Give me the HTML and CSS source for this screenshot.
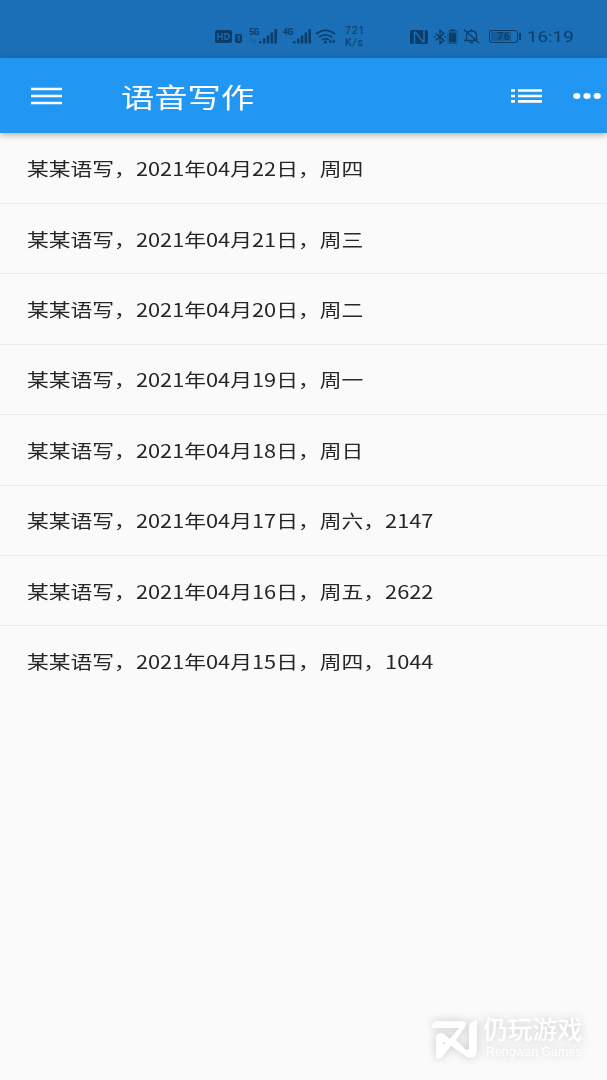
FILE: index.html
```html
<!DOCTYPE html>
<html lang="zh-CN">

<head>
    <meta charset="UTF-8">
    <meta name="viewport" content="width=device-width, initial-scale=1.0">
    <title>语音写作</title>
    <link rel="stylesheet" href="styles.css">
</head>

<body>

    <!-- Status bar -->
    <div class="status-bar">
        <svg class="icon-hd" width="28" height="16" viewBox="0 0 28 16">
            <rect x="0" y="1" width="17" height="13" rx="2" fill="currentColor"/>
            <path d="M3 4v7M7 4v7M3 7.5h4M10 4.7v5.6h1.5q2.5 0 2.5-2.8t-2.5-2.8z" fill="none" stroke="#1a6fb6" stroke-width="1.2"/>
            <rect x="20" y="5" width="7" height="9" rx="2" fill="currentColor"/>
            <path d="M22.500 8l1.500-1v5" fill="none" stroke="#1a6fb6" stroke-width="1.2"/>
        </svg>
        <div class="signal">
            <span class="net">5G</span>
            <svg width="28" height="16" viewBox="0 0 28 16" fill="currentColor">
                <path d="M10 12h2.500v2.500H10zM14 9.500h2.500v5H14zM17.800 6.500h2.500v8h-2.500zM21.600 3.500h2.500v11h-2.500zM25.400 0h2.500v14.500h-2.500z"/>
                <path d="M3 10v4M1.8 11.5L3 10M6 10v4M6 14l1.2-1.5" fill="none" stroke="currentColor" opacity=".3"/>
            </svg>
        </div>
        <div class="signal">
            <span class="net">4G</span>
            <svg width="28" height="16" viewBox="0 0 28 16" fill="currentColor">
                <path d="M10 12h2.500v2.500H10zM14 9.500h2.500v5H14zM17.800 6.500h2.500v8h-2.500zM21.600 3.500h2.500v11h-2.500zM25.400 0h2.500v14.500h-2.500z"/>
            </svg>
        </div>
        <svg class="icon-wifi" width="22" height="16" viewBox="0 0 22 16">
            <path d="M1 5q9.500-7.500 19 0M4 8.200q6.500-5 13 0M7 11q3.500-2.500 7 0" fill="none" stroke="currentColor" stroke-width="1.6"/>
            <circle cx="10.500" cy="13" r="1.500" fill="currentColor"/>
            <path d="M16.500 10.500v4l-3-2zM17.800 10.500v4l3-2z" fill="currentColor"/>
        </svg>
        <div class="speed"><span>721</span><span>K/s</span></div>
        <svg class="icon-nfc" width="18" height="14" viewBox="0 0 18 14">
            <path d="M2 0h14q2 0 2 2v10q0 2-2 2H2q-2 0-2-2V2q0-2 2-2z" fill="currentColor"/>
            <path d="M4.500 14V2.800q0-1.500 1.500 0l6.500 8.400q1.500 1.500 1.500 0V0" fill="none" stroke="#1a6fb6" stroke-width="1.500"/>
        </svg>
        <svg class="icon-bt" width="24" height="16" viewBox="0 0 24 16">
            <path d="M1.500 4.500l8.500 7-4 3v-13l4 3-8.500 7" fill="none" stroke="currentColor" stroke-width="1.400"/>
            <path d="M0 8h1.600M10.500 8h1.600" stroke="currentColor" stroke-width="1.600"/>
            <path d="M16 .5h5v1.500h-5z" fill="currentColor"/>
            <rect x="14" y="2" width="9" height="12.500" rx="1" fill="none" stroke="currentColor" opacity=".6"/>
            <path d="M15 3.500h7v10h-7z" fill="currentColor"/>
        </svg>
        <svg class="icon-bell" width="17" height="15" viewBox="0 0 17 15">
            <path d="M1 11.500h13M3.500 11V7q0-5 5-5t5 5v4M8.500 0v2M6.500 13.500h4M1 .5l15 13.500" fill="none" stroke="currentColor" stroke-width="1.300"/>
        </svg>
        <div class="battery"><span class="battery-level">76</span></div>
        <span class="time"><span class="wide">16:19</span></span>
    </div>

    <!-- App bar -->
    <div class="app-bar">
        <svg class="icon-menu" width="31" height="18" viewBox="0 0 31 18">
            <path d="M0 2h31M0 9h31M0 16h31" stroke="#fff" stroke-width="2.500"/>
        </svg>
        <h1 class="title">语音写作</h1>
        <svg class="icon-list" width="31" height="16" viewBox="0 0 31 16">
            <path d="M0 2.500h4M7 2.500h24M0 8h4M7 8h24M0 13.300h4M7 13.300h24" stroke="#fff" stroke-width="2.700"/>
        </svg>
        <svg class="icon-more" width="28" height="8" viewBox="0 0 28 8" fill="#fff">
            <ellipse cx="3.800" cy="4" rx="3.600" ry="2.900"/>
            <ellipse cx="14" cy="4" rx="3.600" ry="2.900"/>
            <ellipse cx="24.200" cy="4" rx="3.600" ry="2.900"/>
        </svg>
    </div>

    <!-- Diary list -->
    <ul class="list">
        <li><span class="wide">某某语写，2021年04月22日，周四</span></li>
        <li><span class="wide">某某语写，2021年04月21日，周三</span></li>
        <li><span class="wide">某某语写，2021年04月20日，周二</span></li>
        <li><span class="wide">某某语写，2021年04月19日，周一</span></li>
        <li><span class="wide">某某语写，2021年04月18日，周日</span></li>
        <li><span class="wide">某某语写，2021年04月17日，周六，2147</span></li>
        <li><span class="wide">某某语写，2021年04月16日，周五，2622</span></li>
        <li><span class="wide">某某语写，2021年04月15日，周四，1044</span></li>
    </ul>

    <!-- Watermark -->
    <div class="watermark">
        <svg width="46" height="42" viewBox="0 0 46 42" fill="#fff">
            <path d="M1 11Q1 4 7 4h23q7 0 4 6L25 23l9 9q4 3 4-2V10q0-5 8-7v31q-1 9-10 6L20 29 11 40q-6 4-6-2V21q1-7 8-4l6 5 9-11z"/>
            <circle cx="13" cy="26" r="1.300" fill="#e4e4e4"/>
        </svg>
        <div class="brand">
            <span class="brand-cn">仍玩游戏</span>
            <span class="brand-en">Rengwan Games</span>
        </div>
    </div>

</body>

</html>
```
FILE: styles.css
```css
* {
    margin: 0;
    padding: 0;
    box-sizing: border-box;
}

body {
    font-family: 'Noto Sans CJK SC', sans-serif;
    background-color: #fafafa;
    color: #262626;
    width: 607px;
    height: 1080px;
    overflow: hidden;
    position: relative;
}

svg {
    display: block;
    flex: none;
}

.wide {
    display: inline-block;
    transform: scaleX(1.21);
    transform-origin: left center;
    white-space: nowrap;
}

/* Status bar */
.status-bar {
    display: flex;
    align-items: center;
    height: 58px;
    padding: 15px 0 0 215px;
    background-color: #1a6fb6;
    color: #0c3c68;
    font-family: Roboto, sans-serif;
}

.signal {
    position: relative;
    margin-left: 6px;
}

.net {
    position: absolute;
    left: 0;
    top: -1px;
    font-size: 8.5px;
    line-height: 9px;
    font-weight: 700;
    letter-spacing: -0.3px;
}

.icon-wifi {
    margin-left: 4px;
}

.speed {
    display: flex;
    flex-direction: column;
    width: 22px;
    margin-left: 8px;
    font-size: 10.5px;
    line-height: 12px;
    letter-spacing: 0.8px;
}

.icon-nfc {
    margin-left: 43px;
}

.icon-bt {
    margin-left: 6px;
}

.icon-bell {
    margin-left: 5px;
}

.battery {
    position: relative;
    width: 29px;
    height: 13px;
    margin-left: 9px;
    padding: 1px;
    border: 1px solid #0c3c68;
    border-radius: 3px;
}

.battery::after {
    content: '';
    position: absolute;
    right: -4px;
    top: 2px;
    width: 2px;
    height: 7px;
    background-color: #0c3c68;
}

.battery-level {
    display: block;
    width: 20px;
    height: 9px;
    padding-left: 6px;
    background-color: #155d9a;
    font-size: 11px;
    line-height: 10px;
    font-weight: 500;
    letter-spacing: 0.6px;
}

.time {
    margin-left: 9px;
    font-size: 15.5px;
    line-height: 20px;
}

/* App bar */
.app-bar {
    display: flex;
    align-items: center;
    height: 75px;
    padding: 0 6px 0 31px;
    background-color: #2196f3;
    box-shadow: 0 2px 6px rgba(0, 0, 0, 0.3);
}

.title {
    flex: 1;
    margin-left: 59px;
    color: #fff;
    font-size: 27.3px;
    font-weight: 400;
    line-height: 40px;
    transform: scaleX(1.22);
    transform-origin: left center;
}

.icon-more {
    margin-left: 31px;
}

/* List */
.list {
    padding-top: 0.6px;
    list-style: none;
}

.list li {
    display: flex;
    align-items: center;
    height: 70.4px;
    padding: 0 27px;
    border-bottom: 1px solid #ebebeb;
    font-size: 18px;
    line-height: 26px;
}

.list li:last-child {
    border-bottom: none;
    padding-bottom: 1px;
}

/* Watermark */
.watermark {
    position: absolute;
    left: 431px;
    top: 1015px;
    display: flex;
    align-items: center;
    color: #fff;
    filter: drop-shadow(0 0 5px rgba(0, 0, 0, 0.2));
}

.brand {
    display: flex;
    flex-direction: column;
    margin-left: 6px;
}

.brand-cn {
    height: 29px;
    font-size: 24.8px;
    line-height: 27px;
    font-weight: 500;
}

.brand-en {
    padding-left: 3px;
    font-family: 'Liberation Sans', sans-serif;
    font-size: 12.5px;
    line-height: 16px;
    letter-spacing: -0.1px;
}
```
